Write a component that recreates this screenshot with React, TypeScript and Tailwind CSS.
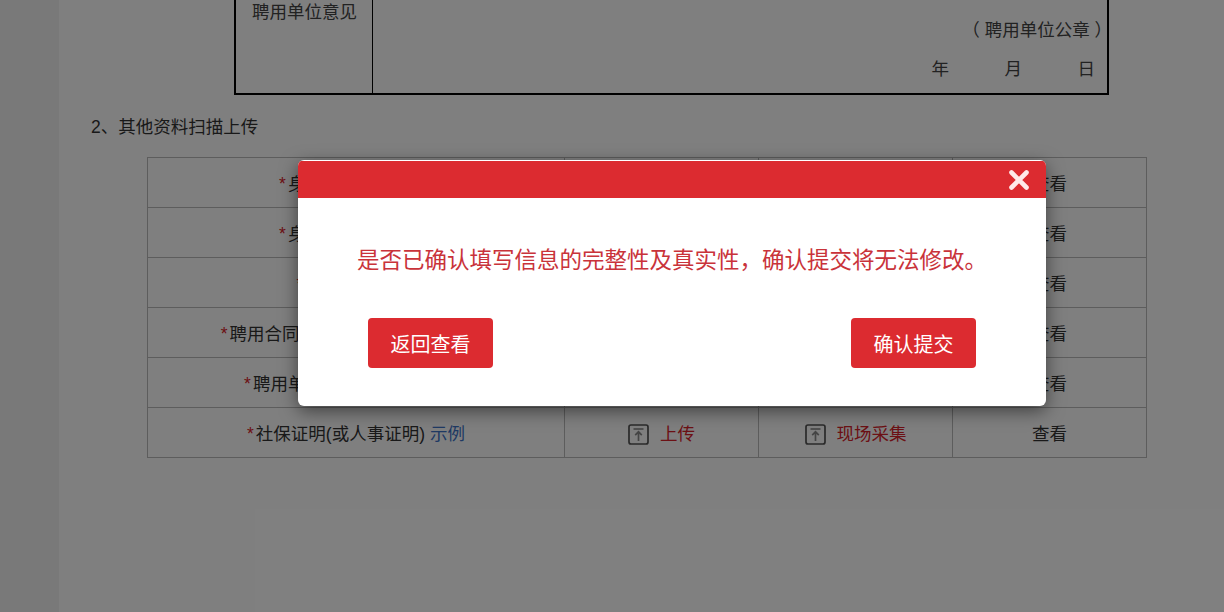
const FONT = "font-['Liberation_Sans','Noto_Sans_CJK_SC',sans-serif]";

const ROWS = ['身份证人像面', '身份证国徽面', '学历证书', '聘用合同(或劳动关系证明书)', '聘用单位营业执照副本', '社保证明(或人事证明)'];

function UploadIcon() {
  return (
    <svg width="21" height="21" viewBox="0 0 21 21" fill="none" className="shrink-0">
      <rect x="1" y="1" width="19" height="19" rx="2" stroke="#555" strokeWidth="1.7" />
      <path d="M5.5 5h10" stroke="#8a8a8a" strokeWidth="1.6" />
      <path d="M10.5 17V8M7.2 11.2l3.3-3.4 3.3 3.4" stroke="#8a8a8a" strokeWidth="1.7" />
    </svg>
  );
}

export default function App() {
  return (
    <div className={`relative flex h-[612px] w-[1224px] overflow-hidden bg-[#f2f2f2] text-[17.5px] text-[#333] ${FONT}`}>
      <div className="w-[59px] shrink-0" />
      <div className="flex-1 bg-white">
        <div className="ml-[175px] flex h-[95px] w-[875px] border-x-2 border-b-2 border-black">
          <div className="w-[137px] shrink-0 border-r border-black pl-[16px] leading-[24px] text-[#444] whitespace-nowrap">聘用单位意见</div>
          <div className="flex flex-1 flex-col items-end pt-[18px] pr-[12px]">
            <div className="-mr-[17px] h-[24px] leading-[24px] whitespace-pre text-[#444]">（ 聘用单位公章 ）</div>
            <div className="mt-[15px] flex gap-[55.5px] leading-[24px] text-[#444]">
              <span>年</span>
              <span>月</span>
              <span>日</span>
            </div>
          </div>
        </div>

        <div className="ml-[32px] mt-[19px] leading-[26px]">2、其他资料扫描上传</div>

        <div className="ml-[88px] mt-[17px] w-[1000px] border-t border-l border-[#bbb]">
          {ROWS.map((label) => (
            <div key={label} className="grid h-[50px] grid-cols-[417px_194px_194px_194px]">
              <div className="flex items-center justify-center border-r border-b border-[#bbb] pt-[3px]">
                <span className="mr-[2px] text-[#d9222a]">*</span>
                <span>{label}</span>
                <span className="ml-[5px] text-[#3f74c9]">示例</span>
              </div>
              <div className="flex items-center justify-center gap-[11px] border-r border-b border-[#bbb] pt-[3px] text-[#d9222a]">
                <UploadIcon />
                <span>上传</span>
              </div>
              <div className="flex items-center justify-center gap-[11px] border-r border-b border-[#bbb] pt-[3px] text-[#d9222a]">
                <UploadIcon />
                <span>现场采集</span>
              </div>
              <div className="flex items-center justify-center border-r border-b border-[#bbb] pt-[3px]">查看</div>
            </div>
          ))}
        </div>
      </div>

      <div className="absolute inset-0 bg-black/50 pl-[298px] pt-[160px]">
        <div className="h-[246px] w-[748px] overflow-hidden rounded-[6px] bg-white pt-px shadow-[0_5px_18px_rgba(0,0,0,0.5)]">
          <div className="flex h-[37px] items-center justify-end bg-[#dc2b30] pr-[16px]">
            <svg width="22" height="22" viewBox="0 0 22 22" fill="none">
              <path d="M3.5 3.5 18.5 18.5M18.5 3.5 3.5 18.5" stroke="#ffe9e9" strokeWidth="4.6" strokeLinecap="round" />
            </svg>
          </div>
          <div className="mt-[45px] text-center text-[22.5px] leading-[36px] whitespace-nowrap text-[#c9333a]">
            是否已确认填写信息的完整性及真实性，确认提交将无法修改。
          </div>
          <div className="mt-[39px] flex justify-between px-[70px]">
            <button className="h-[50px] w-[125px] rounded-[4px] bg-[#dc2b30] pt-[3px] text-[20px] leading-[28px] text-white">返回查看</button>
            <button className="h-[50px] w-[125px] rounded-[4px] bg-[#dc2b30] pt-[3px] text-[20px] leading-[28px] text-white">确认提交</button>
          </div>
        </div>
      </div>
    </div>
  );
}
